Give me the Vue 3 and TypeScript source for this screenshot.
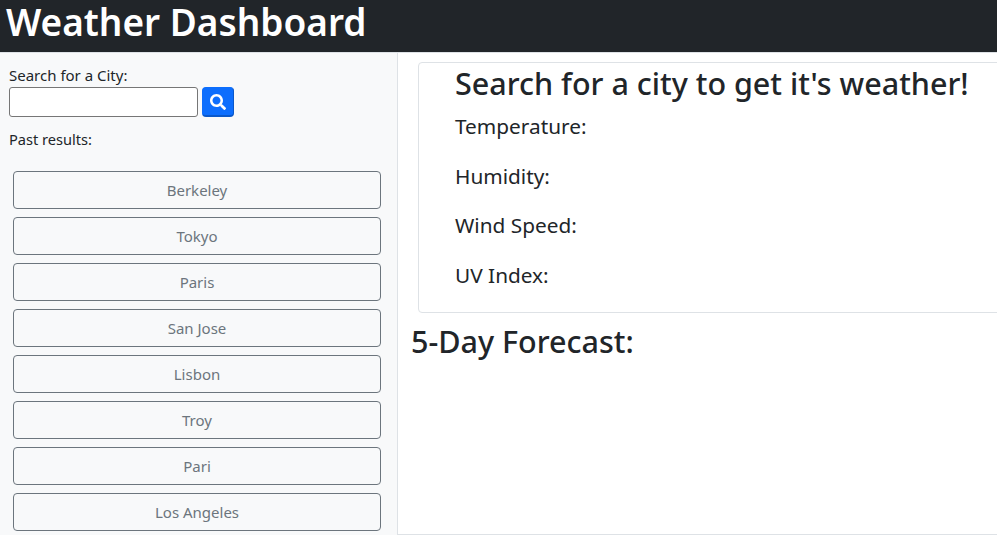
<script setup lang="ts">
const cities: string[] = ['Berkeley', 'Tokyo', 'Paris', 'San Jose', 'Lisbon', 'Troy', 'Pari', 'Los Angeles'];
const stats: string[] = ['Temperature:', 'Humidity:', 'Wind Speed:', 'UV Index:'];
</script>

<template>
  <div class="page">
    <header class="topbar">
      <h1 class="topbar__title">Weather Dashboard</h1>
    </header>
    <div class="content">
      <aside class="sidebar">
        <label class="sidebar__label" for="city">Search for a City:</label>
        <div class="search">
          <input id="city" class="search__input" type="text" />
          <button class="search__btn" type="button" aria-label="Search">
            <svg viewBox="0 0 512 512" width="16" height="16" fill="#fff">
              <path d="M505 442.7 405.3 343c-4.500-4.500-10.600-7-17-7H372c27.600-35.300 44-79.700 44-128C416 93.100 322.900 0 208 0S0 93.100 0 208s93.100 208 208 208c48.300 0 92.700-16.400 128-44v16.300c0 6.400 2.500 12.500 7 17l99.700 99.700c9.400 9.400 24.600 9.400 33.900 0l28.300-28.300c9.400-9.400 9.400-24.600.1-34zM208 336c-70.700 0-128-57.200-128-128 0-70.700 57.200-128 128-128 70.700 0 128 57.200 128 128 0 70.700-57.200 128-128 128z" />
            </svg>
          </button>
        </div>
        <p class="sidebar__past">Past results:</p>
        <div class="history">
          <button v-for="city in cities" :key="city" class="history__btn" type="button">{{ city }}</button>
        </div>
      </aside>
      <main class="main">
        <section class="card">
          <h2 class="card__title">Search for a city to get it's weather!</h2>
          <p v-for="stat in stats" :key="stat" class="card__stat">{{ stat }}</p>
        </section>
        <h2 class="forecast">5-Day Forecast:</h2>
      </main>
    </div>
  </div>
</template>

<style>
html,
body {
  margin: 0;
  background: #fff;
}
</style>

<style scoped>
.page {
  font-family: "Noto Sans", "Open Sans", sans-serif;
  color: #212529;
  overflow: hidden;
}

.topbar {
  height: 52px;
  background: #212529;
  border-bottom: 1px solid #dee2e6;
  padding-left: 6px;
}

.topbar__title {
  margin: 0;
  font-size: 37px;
  line-height: 44px;
  font-weight: 600;
  color: #fff;
}

.content {
  display: flex;
  height: 482px;
  align-items: stretch;
}

.sidebar {
  width: 397px;
  flex-shrink: 0;
  box-sizing: border-box;
  background: #f8f9fa;
  padding: 11px 0 0 9px;
  font-size: 15px;
}

.sidebar__label {
  display: block;
  line-height: 22px;
}

.search {
  display: flex;
  gap: 4px;
  margin-top: 1px;
}

.search__input {
  width: 189px;
  height: 30px;
  box-sizing: border-box;
  border: 1px solid #767676;
  border-radius: 3px;
  background: #fff;
  padding: 0;
}

.search__btn {
  width: 32px;
  height: 30px;
  padding: 0;
  display: flex;
  align-items: center;
  justify-content: center;
  background: #0d6efd;
  border: 1px solid #0d6efd;
  border-bottom: 2px solid #0a58ca;
  border-right-color: #0a58ca;
  border-radius: 4px;
}

.sidebar__past {
  margin: 12px 0 0;
  font-size: 14.600px;
  line-height: 21px;
}

.history {
  display: flex;
  flex-direction: column;
  gap: 8px;
  margin: 21px 0 0 4px;
  width: 368px;
}

.history__btn {
  height: 38px;
  box-sizing: border-box;
  padding: 0;
  background: transparent;
  border: 1px solid #6c757d;
  border-radius: 4px;
  color: #6c757d;
  font-family: inherit;
  font-size: 15px;
}

.main {
  flex: 1;
  min-width: 0;
  overflow: hidden;
  border-left: 1px solid #dee2e6;
  border-bottom: 1px solid #dee2e6;
  padding: 9px 0 0 13px;
}

.card {
  width: 640px;
  height: 251px;
  box-sizing: border-box;
  margin-left: 7px;
  border: 1px solid #dee2e6;
  border-radius: 4px;
  padding: 0 0 0 36px;
  background: #fff;
}

.card__title {
  margin: 0;
  font-size: 30.500px;
  line-height: 41px;
  font-weight: 500;
}

.card__stat {
  margin: 0;
  font-size: 20.800px;
  line-height: 49.500px;
}

.card__title + .card__stat {
  margin-top: -2px;
}

.forecast {
  margin: 8px 0 0;
  font-size: 30.500px;
  line-height: 40px;
  font-weight: 500;
}
</style>
